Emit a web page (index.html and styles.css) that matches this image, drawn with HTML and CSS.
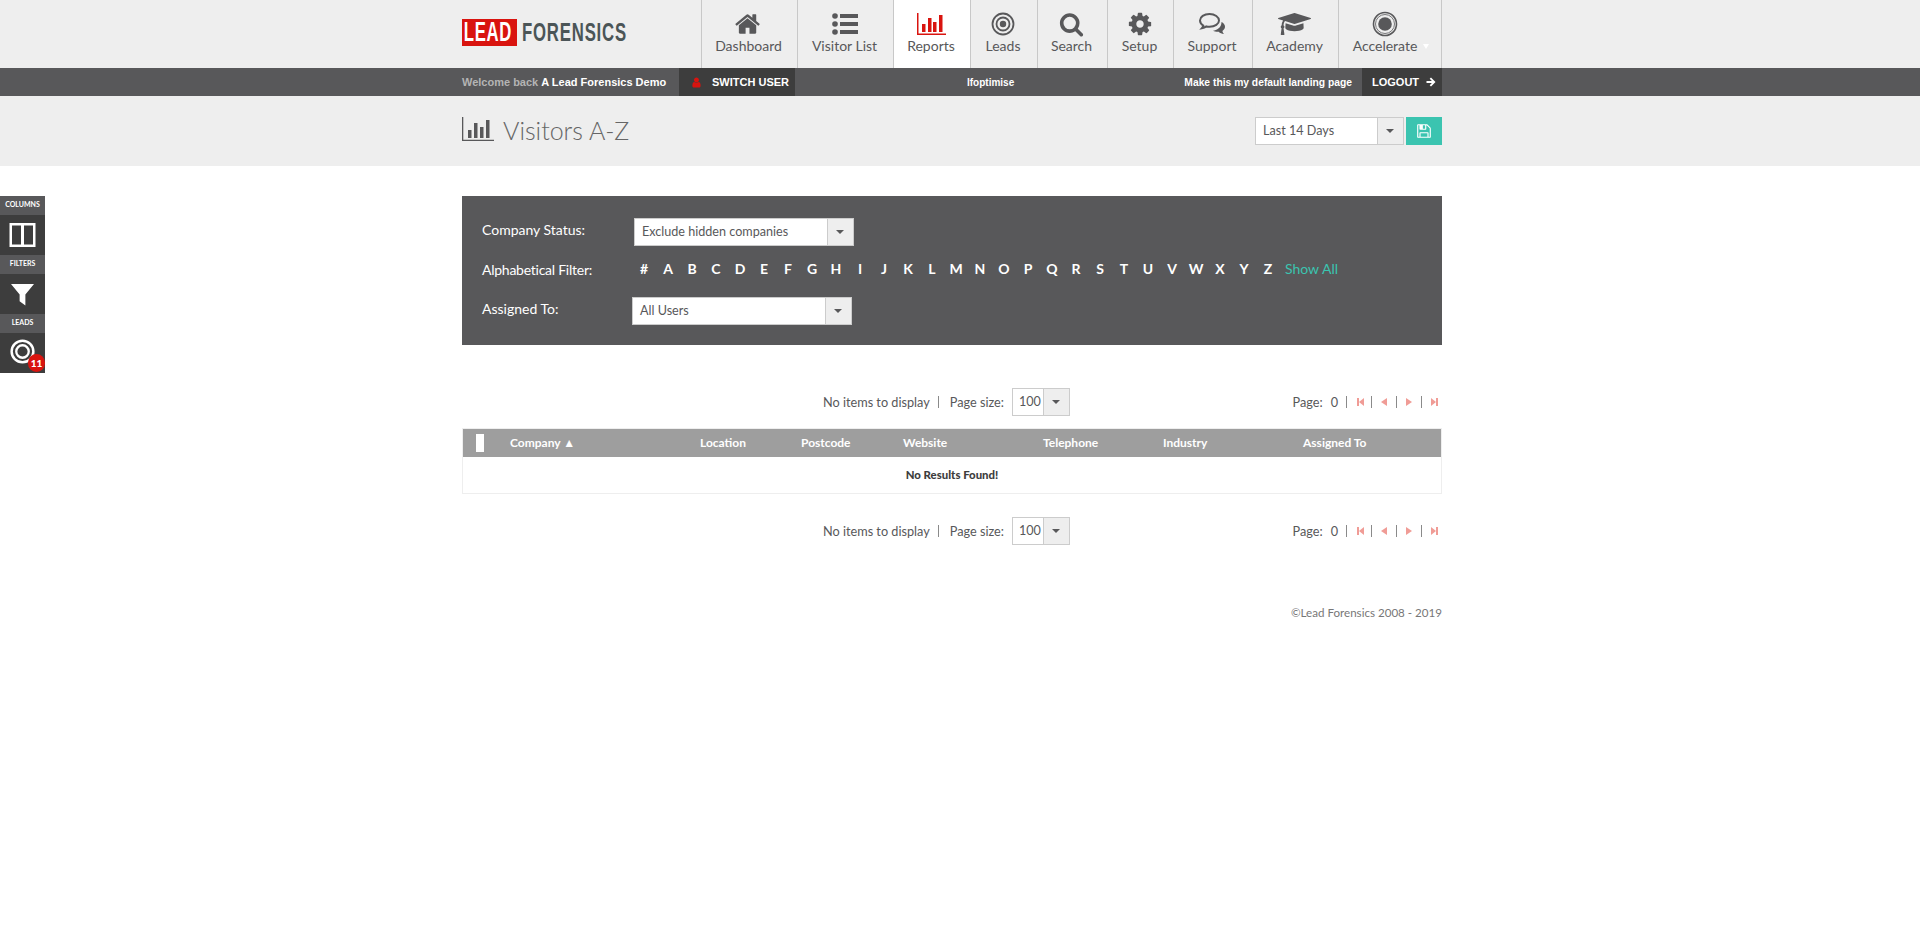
FILE: index.html
```html
<!DOCTYPE html>
<html lang="en">
<head>
    <meta charset="UTF-8">
    <title>Visitors A-Z - Lead Forensics</title>
    <link rel="stylesheet" href="styles.css">
</head>
<body>
    <header class="top-header">
        <div class="wrap top-inner">
            <div class="logo"><span class="logo-lead"><span>LEAD</span></span><span class="logo-name">FORENSICS</span></div>
            <nav class="main-nav">
                <a class="nav-item">
                    <svg class="nav-icon" width="27" height="27" viewBox="0 0 1792 1792"><path d="M1408 992v480q0 26-19 45t-45 19h-384v-384h-256v384h-384q-26 0-45-19t-19-45v-480q0-1 .5-3t.5-3l575-474 575 474q1 2 1 6zm223-69l-62 74q-8 9-21 11h-3q-13 0-21-7l-692-577-692 577q-12 8-24 7-13-2-21-11l-62-74q-8-10-7-23.500t11-21.500l719-599q32-26 76-26t76 26l244 204v-195q0-14 9-23t23-9h192q14 0 23 9t9 23v408l219 182q10 8 11 21.500t-7 23.500z"/></svg>
                    <span>Dashboard</span>
                </a>
                <a class="nav-item">
                    <svg class="nav-icon" width="26" height="22" viewBox="0 0 26 22"><circle cx="3" cy="3" r="2.800"/><circle cx="3" cy="11" r="2.800"/><circle cx="3" cy="19" r="2.800"/><rect x="8" y="1" width="18" height="4"/><rect x="8" y="9" width="18" height="4"/><rect x="8" y="17" width="18" height="4"/></svg>
                    <span>Visitor List</span>
                </a>
                <a class="nav-item nav-active">
                    <svg class="nav-icon" width="29" height="22" viewBox="0 0 29 22"><path d="M0 0h1.500v20.500H29V22H0z"/><rect x="5" y="11" width="3.500" height="8"/><rect x="11" y="5" width="3.500" height="14"/><rect x="16" y="9" width="3.500" height="10"/><rect x="22" y="2" width="3.500" height="17"/></svg>
                    <span>Reports</span>
                </a>
                <a class="nav-item">
                    <svg class="nav-icon nav-icon-line" width="24" height="24" viewBox="0 0 24 24"><circle cx="12" cy="12" r="10.500" stroke-width="1.800"/><circle cx="12" cy="12" r="6.500" stroke-width="1.800"/><circle cx="12" cy="12" r="3.200" class="fill-dot"/></svg>
                    <span>Leads</span>
                </a>
                <a class="nav-item">
                    <svg class="nav-icon" width="25" height="25" viewBox="0 0 1792 1792"><path d="M1216 832q0-185-131.500-316.500t-316.500-131.500-316.500 131.500-131.500 316.500 131.500 316.500 316.500 131.500 316.500-131.500 131.500-316.500zm512 832q0 52-38 90t-90 38q-54 0-90-38l-343-342q-179 124-399 124-143 0-273.500-55.500t-225-150-150-225-55.500-273.500 55.500-273.500 150-225 225-150 273.500-55.500 273.500 55.500 225 150 150 225 55.500 273.500q0 220-124 399l343 343q37 37 37 90z"/></svg>
                    <span>Search</span>
                </a>
                <a class="nav-item">
                    <svg class="nav-icon" width="26" height="26" viewBox="0 0 1792 1792"><path d="M1152 896q0-106-75-181t-181-75-181 75-75 181 75 181 181 75 181-75 75-181zm512-109v222q0 12-8 23t-20 13l-185 28q-19 54-39 91 35 50 107 138 10 12 10 25t-9 23q-27 37-99 108t-94 71q-12 0-26-9l-138-108q-44 23-91 38-16 136-29 186-7 28-36 28h-222q-14 0-24.500-8.500t-11.500-21.500l-28-184q-49-16-90-37l-141 107q-10 9-25 9-14 0-25-11-126-114-165-168-7-10-7-23 0-12 8-23 15-21 51-66.500t54-70.500q-27-50-41-99l-183-27q-13-2-21-12.500t-8-23.500v-222q0-12 8-23t19-13l186-28q14-46 39-92-40-57-107-138-10-12-10-24 0-10 9-23 26-36 98.500-107.500t94.500-71.500q13 0 26 10l138 107q44-23 91-38 16-136 29-186 7-28 36-28h222q14 0 24.500 8.500t11.500 21.500l28 184q49 16 90 37l142-107q9-9 24-9 13 0 25 10 129 119 165 170 7 8 7 22 0 12-8 23-15 21-51 66.500t-54 70.500q26 50 41 98l183 28q13 2 21 12.500t8 23.500z"/></svg>
                    <span>Setup</span>
                </a>
                <a class="nav-item">
                    <svg class="nav-icon" width="26" height="22" viewBox="0 0 26 22"><path d="M10.500 1C5 1 1 4 1 7.500c0 2 1.300 3.800 3.300 5-.2 1-.8 2-1.500 2.800 1.800-.3 3.400-1 4.600-1.900 1 .2 2 .3 3.100.3 5.500 0 9.500-2.800 9.500-6.200S16 1 10.500 1z" class="bubble"/><path d="M22.500 9c2 1 3.500 2.700 3.500 4.700 0 1.700-1 3.200-2.600 4.200.2 1.200.8 2.300 1.600 3.100-2.200-.2-4-1-5.300-2.300-1.700.2-3.900 0-5.700-1 3.800-.3 8.500-3 8.500-8.700z"/></svg>
                    <span>Support</span>
                </a>
                <a class="nav-item">
                    <svg class="nav-icon" width="33" height="26" viewBox="0 0 2304 1792"><path d="M1774 836l18 316q4 69-82 128t-235 93.500-323 34.500-323-34.500-235-93.500-82-128l18-316 574 181q22 7 48 7t48-7zm530-324q0 23-22 31l-1120 352q-4 1-10 1t-10-1l-652-206q-43 34-71 111.500t-34 178.500q63 36 63 109 0 69-58 107l58 433q2 14-8 25-9 11-24 11h-192q-15 0-24-11-10-11-8-25l58-433q-58-38-58-107 0-73 65-111 11-207 98-330l-333-104q-22-8-22-31t22-31l1120-352q4-1 10-1t10 1l1120 352q22 8 22 31z"/></svg>
                    <span>Academy</span>
                </a>
                <a class="nav-item nav-item-last">
                    <svg class="nav-icon nav-icon-line" width="26" height="26" viewBox="0 0 26 26"><circle cx="13" cy="13" r="11.500" stroke-width="1.600"/><circle cx="13" cy="13" r="9.500" stroke-width=".8"/><circle cx="13" cy="13" r="6.800" class="fill-dot"/></svg>
                    <span>Accelerate<i class="nav-caret"></i></span>
                </a>
            </nav>
        </div>
    </header>

    <div class="user-bar">
        <div class="wrap user-inner">
            <span class="welcome">Welcome back <b>A Lead Forensics Demo</b></span>
            <a class="bar-btn switch-btn">
                <svg width="9" height="11" viewBox="200 100 1400 1600"><path d="M1536 1399q0 109-62.500 187t-150.500 78h-854q-88 0-150.500-78t-62.500-187q0-85 8.500-160.500t31.500-152 58.500-131 94-89 134.500-34.500q131 128 313 128t313-128q76 0 134.500 34.500t94 89 58.500 131 31.500 152 8.500 160.500zm-256-887q0 159-112.500 271.500t-271.500 112.500-271.500-112.500-112.500-271.500 112.500-271.500 271.500-112.500 271.500 112.500 112.500 271.500z"/></svg>
                SWITCH USER
            </a>
            <span class="bar-account">lfoptimise</span>
            <a class="bar-default">Make this my default landing page</a>
            <a class="bar-btn logout-btn">
                LOGOUT
                <svg width="10" height="10" viewBox="0 0 10 10"><path d="M5 .5l4.500 4.500L5 9.500 3.700 8.200 5.900 6H.5V4h5.400L3.700 1.800z"/></svg>
            </a>
        </div>
    </div>

    <div class="title-band">
        <div class="wrap title-inner">
            <svg class="title-icon" width="32" height="24" viewBox="0 0 32 24"><path d="M0 0h1.300v22.700H32V24H0z"/><rect x="6" y="13" width="3.500" height="8"/><rect x="12" y="6" width="3.500" height="15"/><rect x="18" y="10" width="3.500" height="11"/><rect x="24" y="3" width="3.500" height="18"/></svg>
            <h1 class="page-title">Visitors A-Z</h1>
            <div class="combo combo-date"><span class="combo-text">Last 14 Days</span><span class="combo-arrow"></span></div>
            <a class="save-btn">
                <svg width="16" height="16" viewBox="0 0 1792 1792"><path d="M512 1536h768v-384h-768v384zm896 0h128v-896q0-14-10-38.500t-20-34.500l-281-281q-10-10-34-20t-39-10v416q0 40-28 68t-68 28h-576q-40 0-68-28t-28-68v-416h-128v1280h128v-416q0-40 28-68t68-28h832q40 0 68 28t28 68v416zm-384-928v-320q0-13-9.500-22.500t-22.500-9.500h-192q-13 0-22.500 9.500t-9.500 22.500v320q0 13 9.500 22.500t22.500 9.500h192q13 0 22.500-9.500t9.500-22.500zm640 32v928q0 40-28 68t-68 28h-1344q-40 0-68-28t-28-68v-1344q0-40 28-68t68-28h928q40 0 88 20t76 48l280 280q28 28 48 76t20 88z"/></svg>
            </a>
        </div>
    </div>

    <aside class="side-tools">
        <div class="side-label">COLUMNS</div>
        <div class="side-tool">
            <svg width="27" height="24" viewBox="0 0 26 24"><path d="M0 0h26v24H0zM2.500 2.500v19h9v-19zm12 0v19h9v-19z" fill-rule="evenodd"/></svg>
        </div>
        <div class="side-label">FILTERS</div>
        <div class="side-tool">
            <svg width="23" height="23" viewBox="0 0 24 24"><path d="M0 1h24L15 12v11.500L9 19v-7z"/></svg>
        </div>
        <div class="side-label">LEADS</div>
        <div class="side-tool">
            <svg class="side-target" width="25" height="25" viewBox="0 0 26 26"><circle cx="13" cy="13" r="11.300" stroke-width="2.600"/><circle cx="13" cy="13" r="6.500" stroke-width="2.400"/></svg>
            <span class="side-badge">11</span>
        </div>
    </aside>

    <main class="wrap">
        <section class="filter-panel">
            <div class="filter-row">
                <label class="filter-label label-status">Company Status:</label>
                <div class="combo combo-filter"><span class="combo-text">Exclude hidden companies</span><span class="combo-arrow"></span></div>
            </div>
            <div class="filter-row filter-row-alpha">
                <label class="filter-label label-alpha">Alphabetical Filter:</label>
                <div class="alpha-list">
                    <a>#</a><a>A</a><a>B</a><a>C</a><a>D</a><a>E</a><a>F</a><a>G</a><a>H</a><a>I</a><a>J</a><a>K</a><a>L</a><a>M</a><a>N</a><a>O</a><a>P</a><a>Q</a><a>R</a><a>S</a><a>T</a><a>U</a><a>V</a><a>W</a><a>X</a><a>Y</a><a>Z</a>
                    <a class="show-all">Show All</a>
                </div>
            </div>
            <div class="filter-row">
                <label class="filter-label">Assigned To:</label>
                <div class="combo combo-filter"><span class="combo-text">All Users</span><span class="combo-arrow"></span></div>
            </div>
        </section>

        <div class="pager pager-top">
            <span class="pager-count">No items to display</span>
            <span class="pager-sep"></span>
            <span class="pager-size">Page size:</span>
            <div class="combo combo-page"><span class="combo-text">100</span><span class="combo-arrow"></span></div>
            <div class="pager-nav">
                <span class="pager-page">Page:</span><span class="pager-num">0</span>
                <span class="pager-sep"></span>
                <i class="pg pg-first"></i>
                <span class="pager-sep"></span>
                <i class="pg pg-prev"></i>
                <span class="pager-sep"></span>
                <i class="pg pg-next"></i>
                <span class="pager-sep"></span>
                <i class="pg pg-last"></i>
            </div>
        </div>

        <div class="grid-box">
            <div class="grid-head">
                <span class="grid-check"></span>
                <span>Company ▲</span>
                <span>Location</span>
                <span>Postcode</span>
                <span>Website</span>
                <span>Telephone</span>
                <span>Industry</span>
                <span>Assigned To</span>
            </div>
            <div class="grid-empty">No Results Found!</div>
        </div>

        <div class="pager pager-bottom">
            <span class="pager-count">No items to display</span>
            <span class="pager-sep"></span>
            <span class="pager-size">Page size:</span>
            <div class="combo combo-page"><span class="combo-text">100</span><span class="combo-arrow"></span></div>
            <div class="pager-nav">
                <span class="pager-page">Page:</span><span class="pager-num">0</span>
                <span class="pager-sep"></span>
                <i class="pg pg-first"></i>
                <span class="pager-sep"></span>
                <i class="pg pg-prev"></i>
                <span class="pager-sep"></span>
                <i class="pg pg-next"></i>
                <span class="pager-sep"></span>
                <i class="pg pg-last"></i>
            </div>
        </div>

        <footer class="copyright">©Lead Forensics 2008 - 2019</footer>
    </main>
</body>
</html>
```

FILE: styles.css
```css
* {
    box-sizing: border-box;
}

body {
    margin: 0;
    background-color: #ffffff;
    color: #58585a;
    font-family: Lato, 'Noto Sans', sans-serif;
    font-size: 13px;
}

a {
    text-decoration: none;
}

.wrap {
    width: 980px;
    margin-left: calc(50vw - 498px);
}

/* header */
.top-header {
    background-color: #eeeeee;
    height: 68px;
}

.top-inner {
    display: flex;
    justify-content: space-between;
    height: 68px;
}

/* no condensed face is installed, so the wordmark is squeezed */
.logo {
    display: flex;
    align-items: center;
    height: 27px;
    margin-top: 19px;
    font-family: 'Liberation Sans', sans-serif;
    font-weight: bold;
    white-space: nowrap;
}

.logo-lead {
    display: block;
    background-color: #d9140f;
    color: #ffffff;
    font-size: 27px;
    line-height: 27px;
    width: 55px;
}

.logo-lead span {
    display: block;
    padding-left: 3px;
    letter-spacing: 1px;
    transform: scaleX(.62);
    transform-origin: left center;
}

.logo-name {
    display: block;
    width: 105px;
    color: #4b5557;
    font-size: 25px;
    letter-spacing: 1.200px;
    margin-left: 5px;
    transform: scaleX(.67);
    transform-origin: left center;
}

.main-nav {
    display: grid;
    grid-template-columns: 96px 96px 77px 67px 70px 66px 79px 86px 104px;
}

.nav-item {
    position: relative;
    display: flex;
    flex-direction: column;
    align-items: center;
    padding-right: 2px;
    border-left: 1px solid #c8c8c8;
    color: #58585a;
    font-size: 14px;
    line-height: 17px;
}

.nav-item span {
    margin-top: -2px;
}

.nav-item-last {
    border-right: 1px solid #c8c8c8;
    padding-right: 10px;
}

.nav-active {
    background-color: #ffffff;
}

.nav-icon {
    height: 30px;
    margin-top: 9px;
    fill: #58585a;
}

.nav-active .nav-icon {
    fill: #d9140f;
}

.nav-icon-line circle {
    fill: none;
    stroke: #58585a;
}

.nav-icon-line .fill-dot {
    fill: #58585a;
    stroke: none;
}

.bubble {
    fill: none;
    stroke: #58585a;
    stroke-width: 2;
}

.nav-caret {
    position: absolute;
    right: 12px;
    top: 44px;
    width: 0;
    height: 0;
    border-left: 3px solid transparent;
    border-right: 3px solid transparent;
    border-top: 5px solid #ffffff;
}

/* dark user bar */
.user-bar {
    background-color: #58585a;
    height: 28px;
    font-family: 'Liberation Sans', Arial, sans-serif;
    font-size: 11px;
    font-weight: bold;
    color: #ffffff;
}

.user-inner {
    display: flex;
    align-items: center;
    height: 28px;
}

.welcome {
    color: #b4b4b4;
    width: 217px;
}

.welcome b {
    color: #ffffff;
}

.bar-btn {
    display: flex;
    align-items: center;
    height: 28px;
    background-color: #3d3d3d;
    color: #ffffff;
}

.bar-btn svg {
    fill: #ffffff;
}

.switch-btn {
    width: 116px;
    padding-left: 13px;
    gap: 11px;
}

.switch-btn svg {
    fill: #d9140f;
}

.bar-account {
    margin-left: 172px;
    font-size: 10px;
}

.bar-default {
    margin-left: auto;
    margin-right: 10px;
    color: #ffffff;
    font-size: 10.300px;
}

.logout-btn {
    width: 80px;
    padding-left: 10px;
    gap: 7px;
}

/* title band */
.title-band {
    background-color: #eeeeee;
    height: 70px;
}

.title-inner {
    display: flex;
    align-items: flex-start;
    padding-top: 21px;
}

.title-icon {
    fill: #58585a;
}

.page-title {
    margin: -1px 0 0 9px;
    font-size: 25px;
    line-height: 28px;
    font-weight: 300;
    color: #666666;
    flex: 1;
}

.save-btn {
    display: flex;
    align-items: center;
    justify-content: center;
    width: 36px;
    height: 28px;
    margin-left: 2px;
    background-color: #3bc4b0;
}

.save-btn svg {
    fill: #ffffff;
}

/* select look-alike */
.combo {
    display: flex;
    height: 28px;
    border: 1px solid #cccccc;
    background-color: #ffffff;
    color: #58585a;
}

.combo-text {
    flex: 1;
    line-height: 25px;
    padding-left: 7px;
    font-size: 12.600px;
}

.combo-arrow {
    position: relative;
    width: 26px;
    border-left: 1px solid #cccccc;
    background-color: #eeeeee;
}

.combo-arrow::after {
    content: "";
    position: absolute;
    left: 8px;
    top: 11px;
    border-left: 4px solid transparent;
    border-right: 4px solid transparent;
    border-top: 4px solid #58585a;
}

.combo-date {
    width: 149px;
}

.combo-filter {
    width: 220px;
}

.combo-page {
    width: 58px;
}

.combo-page .combo-text {
    padding-left: 6px;
}

/* floating tools on the left */
.side-tools {
    position: absolute;
    left: 0;
    top: 196px;
    width: 45px;
    background-color: #3d3d3d;
}

.side-label {
    height: 19px;
    background-color: #58585a;
    color: #ffffff;
    font-size: 7px;
    font-weight: 700;
    line-height: 17px;
    text-align: center;
}

.side-tool {
    position: relative;
    display: flex;
    align-items: center;
    justify-content: center;
    height: 40px;
}

.side-tool svg {
    fill: #ffffff;
}

.side-tool .side-target {
    fill: none;
    margin-top: -4px;
}

.side-target circle {
    stroke: #ffffff;
}

.side-badge {
    position: absolute;
    left: 28px;
    top: 21px;
    width: 17px;
    height: 18px;
    border-radius: 9px;
    background-color: #d9140f;
    color: #ffffff;
    font-size: 10px;
    font-weight: 900;
    line-height: 18px;
    text-align: center;
}

/* filter panel */
.filter-panel {
    margin-top: 30px;
    height: 149px;
    padding: 22px 20px 0;
    background-color: #58585a;
    color: #ffffff;
}

.filter-row {
    display: flex;
    align-items: center;
    height: 28px;
}

.filter-row-alpha {
    margin: 9px 0 14px;
}

.filter-label {
    width: 150px;
    font-size: 14px;
    padding-bottom: 5px;
}

.label-status {
    width: 152px;
}

.label-alpha {
    padding-bottom: 0;
    letter-spacing: -.25px;
}

.alpha-list {
    display: flex;
    align-items: center;
    padding-bottom: 1px;
    font-size: 14px;
    font-weight: 700;
}

.alpha-list a {
    width: 24px;
    text-align: center;
    color: #ffffff;
}

.alpha-list .show-all {
    width: auto;
    margin-left: 5px;
    color: #3bc4b0;
    font-weight: 400;
}

/* pagers */
.pager {
    display: flex;
    align-items: center;
    height: 28px;
    padding-left: 361px;
    font-size: 12.700px;
    color: #58585a;
}

.pager span {
    padding-bottom: 1px;
}

.pager-top {
    margin-top: 43px;
}

.pager-bottom {
    margin-top: 23px;
}

.pager-sep {
    display: block;
    width: 1px;
    height: 12px;
    margin: 0 8px;
    background-color: #8a8a8a;
}

.pager-size {
    margin: 0 8px 0 3px;
}

.pager-nav {
    display: flex;
    align-items: center;
    margin-left: auto;
}

.pager-num {
    margin: 0 8px;
}

.pager-nav .pager-sep {
    margin: 0;
}

.pg {
    position: relative;
    display: block;
    width: 24px;
    height: 10px;
}

.pg-last {
    width: 20px;
}

.pg::before {
    content: "";
    position: absolute;
    top: 1px;
    border-top: 4px solid transparent;
    border-bottom: 4px solid transparent;
}

.pg-first::before {
    left: 12px;
    border-right: 5px solid #f09c96;
}

.pg-prev::before {
    left: 9px;
    border-right: 6px solid #f09c96;
}

.pg-next::before {
    left: 9px;
    border-left: 6px solid #f09c96;
}

.pg-last::before {
    left: 9px;
    border-left: 5px solid #f09c96;
}

.pg-first::after,
.pg-last::after {
    content: "";
    position: absolute;
    top: 1px;
    width: 2px;
    height: 8px;
    background-color: #f09c96;
}

.pg-first::after {
    left: 10px;
}

.pg-last::after {
    left: 14px;
}

/* result grid */
.grid-box {
    margin-top: 12px;
    border: 1px solid #eeeeee;
}

.grid-head {
    display: grid;
    grid-template-columns: 47px 190px 101px 102px 140px 120px 140px 138px;
    align-items: center;
    height: 28px;
    padding-bottom: 1px;
    background-color: #9e9e9e;
    color: #ffffff;
    font-size: 12px;
    font-weight: 700;
}

.grid-check {
    display: block;
    width: 8px;
    height: 18px;
    margin-left: 13px;
    background-color: #ffffff;
}

.grid-empty {
    height: 36px;
    line-height: 36px;
    text-align: center;
    font-size: 11.400px;
    font-weight: 900;
    color: #3d3d3d;
}

.copyright {
    margin-top: 61px;
    text-align: right;
    font-size: 11.600px;
    color: #777777;
}
```
